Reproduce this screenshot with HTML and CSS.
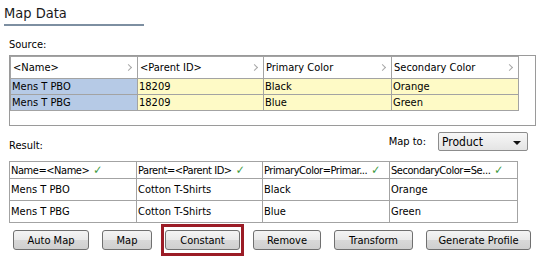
FILE: index.html
```html
<!DOCTYPE html>
<html lang="en">
<head>
  <meta charset="UTF-8">
  <meta name="viewport" content="width=device-width, initial-scale=1.0">
  <title>Map Data</title>
  <link rel="stylesheet" href="styles.css">
</head>
<body>
  <div class="panel">
    <h1 class="title">Map Data</h1>

    <!-- Source data -->
    <div class="label source-label">Source:</div>
    <div class="source-box">
      <div class="grid source-grid">
        <div class="head">&lt;Name&gt;<span class="chev"></span></div>
        <div class="head">&lt;Parent ID&gt;<span class="chev"></span></div>
        <div class="head">Primary Color<span class="chev"></span></div>
        <div class="head">Secondary Color<span class="chev"></span></div>

        <div class="cell key">Mens T PBO</div>
        <div class="cell val">18209</div>
        <div class="cell val">Black</div>
        <div class="cell val">Orange</div>

        <div class="cell key">Mens T PBG</div>
        <div class="cell val">18209</div>
        <div class="cell val">Blue</div>
        <div class="cell val">Green</div>
      </div>
    </div>

    <!-- Result -->
    <div class="result-bar">
      <div class="label result-label">Result:</div>
      <div class="map-to">
        <span class="label">Map to:</span>
        <div class="select">
          <span>Product</span>
          <span class="caret"></span>
        </div>
      </div>
    </div>

    <div class="grid result-grid">
      <div class="head">Name=&lt;Name&gt;<span class="check">&#10003;</span></div>
      <div class="head">Parent=&lt;Parent ID&gt;<span class="check">&#10003;</span></div>
      <div class="head">PrimaryColor=Primar...<span class="check">&#10003;</span></div>
      <div class="head">SecondaryColor=Se...<span class="check">&#10003;</span></div>

      <div class="cell">Mens T PBO</div>
      <div class="cell">Cotton T-Shirts</div>
      <div class="cell">Black</div>
      <div class="cell">Orange</div>

      <div class="cell">Mens T PBG</div>
      <div class="cell">Cotton T-Shirts</div>
      <div class="cell">Blue</div>
      <div class="cell">Green</div>
    </div>

    <div class="actions">
      <button class="btn btn-auto">Auto Map</button>
      <button class="btn btn-map">Map</button>
      <span class="highlight"><button class="btn btn-constant">Constant</button></span>
      <button class="btn btn-remove">Remove</button>
      <button class="btn btn-transform">Transform</button>
      <button class="btn btn-profile">Generate Profile</button>
    </div>
  </div>
</body>
</html>
```

FILE: styles.css
```css
body {
  margin: 0;
  padding: 0;
  background-color: #ffffff;
  color: #000;
  font-family: "DejaVu Sans Condensed", "Liberation Sans", sans-serif;
  font-stretch: condensed;
  font-size: 11px;
}

.panel {
  width: 539px;
  height: 260px;
  overflow: hidden;
}

.title {
  margin: 0 0 0 4px;
  padding-top: 5px;
  padding-bottom: 2px;
  width: 140px;
  font-size: 14.5px;
  font-weight: normal;
  line-height: 17px;
  color: #1a1a1a;
  border-bottom: 2px solid #7d8fa1;
}

.label {
  line-height: 13px;
}

.source-label {
  margin: 12px 0 0 9px;
}

.source-box {
  margin: 4px 0 0 9px;
  width: 525px;
  height: 69px;
  border: 1px solid #9a9a9a;
}

.grid {
  display: grid;
  gap: 1px;
  padding: 1px;
  background-color: #a3a3a3;
}

.source-grid {
  width: 507px;
  grid-template-columns: 126px 125px 127px 126px;
  grid-template-rows: 21px 15px 15px;
}

.result-grid {
  margin: 10px 0 0 9px;
  width: 507px;
  grid-template-columns: 126px 125px 126px 127px;
  grid-template-rows: 16px 21px 21px;
}

.head,
.cell {
  display: flex;
  align-items: center;
  white-space: nowrap;
  overflow: hidden;
  background-color: #fff;
}

.source-grid .head {
  justify-content: space-between;
  padding: 0 6px 0 2px;
}

.source-grid .cell {
  padding-left: 1px;
}

.cell.key {
  background-color: #b6cae6;
}

.cell.val {
  background-color: #fefac6;
}

.chev {
  width: 4px;
  height: 4px;
  border-top: 1px solid #a8a8a8;
  border-right: 1px solid #a8a8a8;
  transform: rotate(45deg);
}

.result-grid .head,
.result-grid .cell {
  padding-left: 1px;
}

.result-grid .head {
  letter-spacing: -0.45px;
}

.check {
  flex-shrink: 0;
  margin-left: 4px;
  color: #3c9a3c;
  font-size: 12px;
  line-height: 14px;
  letter-spacing: 0;
}

.result-bar {
  display: flex;
  justify-content: space-between;
  margin-top: 6px;
  height: 19px;
  padding: 0 11px 0 9px;
}

.result-label {
  align-self: flex-end;
  margin-bottom: -1px;
}

.map-to {
  display: flex;
  align-items: center;
  gap: 12px;
}

.select {
  display: flex;
  align-items: center;
  justify-content: space-between;
  box-sizing: border-box;
  width: 90px;
  height: 19px;
  padding: 0 6px 0 3px;
  border: 1px solid #8c8c8c;
  border-radius: 2px;
  background: linear-gradient(#f7f7f7, #e4e4e4);
  font-size: 12px;
}

.caret {
  width: 0;
  height: 0;
  margin-top: 2px;
  border-left: 4px solid transparent;
  border-right: 4px solid transparent;
  border-top: 4px solid #111;
}

.actions {
  display: flex;
  gap: 13px;
  margin: 7px 0 0 13px;
}

.btn {
  box-sizing: border-box;
  height: 20px;
  padding: 0;
  border: 1px solid #707070;
  border-radius: 3px;
  background: linear-gradient(#f4f4f4 0%, #e9e9e9 50%, #d8d8d8 51%, #cfcfcf 100%);
  font-family: inherit;
  font-stretch: condensed;
  font-size: 11px;
  color: #000;
  cursor: pointer;
}

.btn-auto { width: 76px; }
.btn-map { width: 50px; }
.btn-constant { width: 75px; }
.btn-remove { width: 68px; }
.btn-transform { width: 79px; }
.btn-profile { width: 105px; }

.highlight {
  display: flex;
  margin: -6px -4px;
  padding: 3px 1px;
  border: 3px solid #9b1c26;
}
```
